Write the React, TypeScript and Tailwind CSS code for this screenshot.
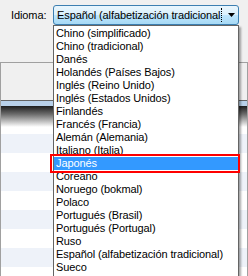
import React from "react";

const items = [
  "Chino (simplificado)",
  "Chino (tradicional)",
  "Danés",
  "Holandés (Países Bajos)",
  "Inglés (Reino Unido)",
  "Inglés (Estados Unidos)",
  "Finlandés",
  "Francés (Francia)",
  "Alemán (Alemania)",
  "Italiano (Italia)",
  "Japonés",
  "Coreano",
  "Noruego (bokmal)",
  "Polaco",
  "Portugués (Brasil)",
  "Portugués (Portugal)",
  "Ruso",
  "Español (alfabetización tradicional)",
  "Sueco",
];

const font = { fontFamily: '"Liberation Sans", Arial, sans-serif' };

export default function App() {
  const rows = Array.from({ length: 8 });
  return (
    <div
      className="relative w-[248px] h-[276px] overflow-hidden bg-[#f0f0f0] text-[11px] leading-[13px] tracking-[-0.1px] text-black"
      style={font}
    >
      {/* top area with label + combo */}
      <div className="h-[62px] flex items-start pt-[5px] pl-[11px]">
        <div className="w-[42px] pt-[4px]">Idioma:</div>
        <div className="relative w-[186px] h-[20px] rounded-[3px] border border-[#3c7fb1] bg-[linear-gradient(to_bottom,#eaf6fd_0%,#d9f0fc_50%,#bee6fd_50%,#a7d9f5_100%)] flex items-center">
          <div className="ml-[2px] w-[166px] h-[14px] overflow-hidden whitespace-nowrap border-r border-dotted border-black pl-px pt-px">
            Español (alfabetización tradicional
          </div>
          <svg className="absolute left-[174px] top-[7px]" width="7" height="4" viewBox="0 0 7 4">
            <path d="M0 0H7L3.5 4Z" fill="#000" />
          </svg>
        </div>
      </div>

      {/* underlying panel */}
      <div className="h-[214px] border border-b-2 border-[#a0a0a0] flex flex-col">
        <div className="h-[38px] bg-[#f0f0f0] border-b border-[#646464] shrink-0" />
        <div className="h-[5px] bg-[#b9d1ea] shrink-0" />
        <div className="h-[21px] bg-[linear-gradient(to_bottom,#1e1e1e,#6e6e6e_40%,#ffffff)] shrink-0" />
        <div className="h-[7px] bg-white shrink-0" />
        {rows.map((_, i) => (
          <div
            key={i}
            className={
              i % 2 === 0 ? "h-[19px] bg-[#eef2f9] shrink-0" : "h-[19px] bg-white shrink-0"
            }
          />
        ))}
      </div>

      {/* dropdown list */}
      <div className="absolute left-[53px] top-[25px] w-[186px] h-[260px] bg-white border border-[#646464] pt-px shadow-[2px_2px_2px_rgba(0,0,0,0.35)]">
        {items.map((t) => (
          <div
            key={t}
            className={
              t === "Japonés"
                ? "h-[13px] pl-[2px] bg-[#3399ff] text-white whitespace-nowrap"
                : "h-[13px] pl-[2px] whitespace-nowrap"
            }
          >
            {t}
          </div>
        ))}
      </div>

      {/* red highlight box */}
      <div className="absolute left-[50px] top-[154px] w-[190px] h-[19px] border-2 border-[#ff0000]" />
    </div>
  );
}
